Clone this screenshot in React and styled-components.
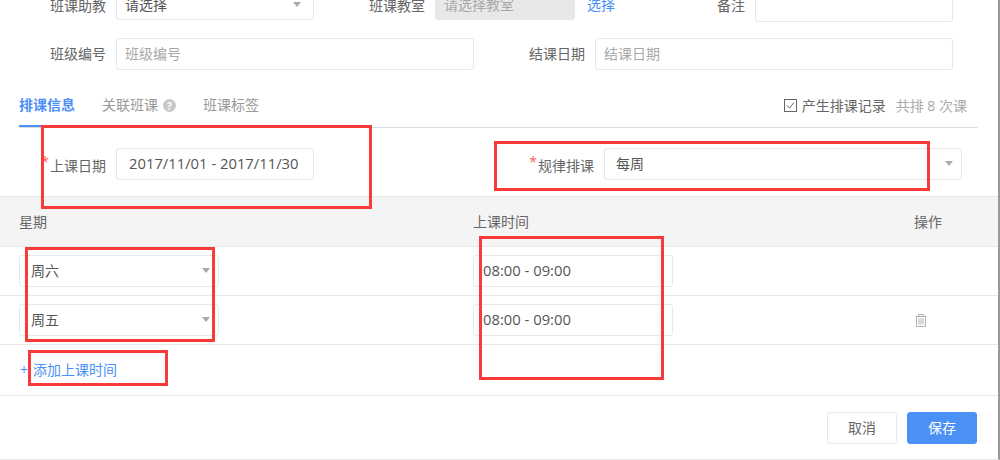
import React from "react"
import styled, { createGlobalStyle } from "styled-components"

const GlobalStyle = createGlobalStyle`
	html, body {
		margin: 0;
		padding: 0;
		background: #fff;
	}
	body {
		font-family: "Open Sans", "Noto Sans CJK SC", sans-serif;
		font-size: 14px;
		color: #666;
	}
`

const Page = styled.div`
	position: relative;
	width: 1000px;
	height: 460px;
	overflow: hidden;
	background: #fff;
	box-sizing: border-box;
	border-bottom: 1px solid #e8e8e8;
	border-right: 2px solid #999;
`

const FormRow = styled.div`
	display: flex;
	align-items: center;
	padding-left: 19px;
	margin-top: ${p => p.$top}px;
	height: 32px;
`

const Label = styled.span`
	flex: none;
	width: ${p => p.$width || 87}px;
	margin-left: ${p => p.$gap || 0}px;
	margin-right: 10px;
	padding: ${p => p.$low ? "2px 0 0" : "0 0 2px"};
	text-align: right;
	font-size: 14px;
	color: #666;
	white-space: nowrap;
`

const Required = styled.i`
	font-style: normal;
	color: #ff5c5c;
	font-size: 14px;
	line-height: 1;
	margin-right: 1px;
	position: relative;
	top: -4px;
`

const Box = styled.div`
	flex: none;
	box-sizing: border-box;
	display: flex;
	align-items: center;
	justify-content: space-between;
	width: ${p => p.$width}px;
	height: 32px;
	margin-top: ${p => p.$shift || 0}px;
	padding: 0 ${p => p.$padRight || 8}px ${p => p.$low ? 0 : 2}px ${p => p.$pad || 8}px;
	border: 1px solid #e8e8e8;
	border-radius: 3px;
	background: ${p => p.$disabled ? "#e8e8e8" : "#fff"};
	color: ${p => p.$placeholder ? "#a8a8a8" : "#555"};
	font-size: ${p => p.$size || 14}px;
	white-space: nowrap;
`

const Caret = styled.span`
	flex: none;
	width: 0;
	height: 0;
	border-left: 4.5px solid transparent;
	border-right: 4.5px solid transparent;
	border-top: 5px solid #aaa;
`

const SelectLink = styled.a`
	margin-left: 12px;
	color: #4a90f5;
	font-size: 14px;
	white-space: nowrap;
`

const Tabs = styled.div`
	display: flex;
	align-items: flex-start;
	justify-content: space-between;
	margin: 22px 20px 0 19px;
	height: 35px;
	border-bottom: 1px solid #ddd;
`

const TabList = styled.div`
	display: flex;
	gap: 27px;
`

const Tab = styled.div`
	display: flex;
	align-items: flex-start;
	gap: 5px;
	height: 35px;
	box-sizing: border-box;
	padding-top: 3px;
	line-height: 20px;
	font-size: 14px;
	font-weight: ${p => p.$active ? 700 : 400};
	color: ${p => p.$active ? "#4a90f5" : "#999"};
	border-bottom: ${p => p.$active ? "2px solid #4a90f5" : "none"};
`

const Help = styled.span`
	display: inline-flex;
	align-items: center;
	justify-content: center;
	width: 13px;
	height: 13px;
	margin-top: 4px;
	border-radius: 50%;
	background: #c8c8c8;
	color: #fff;
	font-size: 10px;
	line-height: 1;
	font-weight: 700;
`

const RecordWrap = styled.div`
	display: flex;
	align-items: center;
	height: 26px;
	margin-right: 11px;
`

const Check = styled.span`
	display: flex;
	align-items: center;
	justify-content: center;
	width: 13px;
	height: 13px;
	box-sizing: border-box;
	border: 1px solid #666;
	margin-right: 5px;
`

const RecordText = styled.span`
	color: #666;
	font-size: 14px;
`

const Total = styled.span`
	margin-left: 10px;
	color: #aaa;
	font-size: 14px;
`

const DateRow = styled.div`
	display: flex;
	align-items: center;
	padding-left: 19px;
	margin-top: 20px;
	height: 32px;
`

const Table = styled.div`
	margin-top: 16px;
`

const Grid = styled.div`
	display: grid;
	grid-template-columns: 454px 441px 1fr;
	align-items: center;
	box-sizing: border-box;
	height: ${p => p.$height}px;
	padding-left: 19px;
	border-bottom: 1px solid #e8e8e8;
	background: ${p => p.$head ? "#f4f4f4" : "#fff"};
	border-top: ${p => p.$head ? "1px solid #e8e8e8" : "none"};
`

const HeadCell = styled.div`
	padding-bottom: 2px;
	color: #666;
	font-size: 14px;
`

const TrashCell = styled.div`
	display: flex;
	padding: 0 0 0 1px;
`

const AddRow = styled.div`
	display: flex;
	align-items: center;
	height: 51px;
	box-sizing: border-box;
	padding: 0 0 2px 20px;
	border-bottom: 1px solid #e8e8e8;
	color: #4a90f5;
	font-size: 14px;
	gap: 5px;
`

const Footer = styled.div`
	display: flex;
	justify-content: flex-end;
	gap: 10px;
	padding: 16px 21px 0 0;
`

const Button = styled.button`
	width: 70px;
	height: 32px;
	padding: 0 0 2px;
	border-radius: 3px;
	border: 1px solid ${p => p.$primary ? "#4a90f5" : "#e8e8e8"};
	background: ${p => p.$primary ? "#4a90f5" : "#fff"};
	color: ${p => p.$primary ? "#fff" : "#666"};
	font-family: inherit;
	font-size: 14px;
`

const Mark = styled.div`
	position: absolute;
	left: ${p => p.$x}px;
	top: ${p => p.$y}px;
	width: ${p => p.$w}px;
	height: ${p => p.$h}px;
	box-sizing: border-box;
	border: 3px solid #f93a3a;
	pointer-events: none;
`

const rows = [
	{ day: "周六", time: "08:00 - 09:00" },
	{ day: "周五", time: "08:00 - 09:00", removable: true },
]

const marks = [
	[41, 125, 331, 84],
	[494, 141, 436, 50],
	[25, 247, 190, 95],
	[479, 236, 185, 144],
	[28, 350, 140, 36],
]

const TrashIcon = () => (
	<svg width="12" height="13" viewBox="0 0 12 13" fill="none" stroke="#b0b0b0" strokeWidth="1">
		<path d="M0.5 2.5 H11.5 M3.5 2.5 V0.5 H8.5 V2.5 M1.5 2.5 V12.5 H10.5 V2.5 M4 4.5 V10.5 M6 4.5 V10.5 M8 4.5 V10.5" />
	</svg>
)

export default function App() {
	return (
		<Page>
			<GlobalStyle />
			<FormRow $top={-12}>
				<Label $low>班课助教</Label>
				<Box $width={198} $padRight={12} $low>请选择<Caret /></Box>
				<Label $gap={24} $low>班课教室</Label>
				<Box $width={140} $disabled $placeholder $low>请选择教室</Box>
				<SelectLink>选择</SelectLink>
				<Label $width={130} $low>备注</Label>
				<Box $width={198} $shift={4} />
			</FormRow>
			<FormRow $top={18}>
				<Label>班级编号</Label>
				<Box $width={358} $placeholder>班级编号</Box>
				<Label $gap={24}>结课日期</Label>
				<Box $width={358} $placeholder>结课日期</Box>
			</FormRow>
			<Tabs>
				<TabList>
					<Tab $active>排课信息</Tab>
					<Tab>关联班课<Help>?</Help></Tab>
					<Tab>班课标签</Tab>
				</TabList>
				<RecordWrap>
					<Check>
						<svg width="9" height="9" viewBox="0 0 9 9" fill="none" stroke="#666" strokeWidth="1">
							<path d="M1 4.5 L3.5 7 L8 1.5" />
						</svg>
					</Check>
					<RecordText>产生排课记录</RecordText>
					<Total>共排 8 次课</Total>
				</RecordWrap>
			</Tabs>
			<DateRow>
				<Label $low><Required>*</Required>上课日期</Label>
				<Box $width={198} $pad={12} $size={14.8}>2017/11/01 - 2017/11/30</Box>
				<Label $low $gap={193}><Required>*</Required>规律排课</Label>
				<Box $width={358} $pad={11}>每周<Caret /></Box>
			</DateRow>
			<Table>
				<Grid $head $height={51}>
					<HeadCell>星期</HeadCell>
					<HeadCell>上课时间</HeadCell>
					<HeadCell>操作</HeadCell>
				</Grid>
				{rows.map(row => (
					<Grid $height={49} key={row.day}>
						<Box $width={200} $pad={11}>{row.day}<Caret /></Box>
						<Box $width={200} $pad={9} $size={14.8}>{row.time}</Box>
						<TrashCell>{row.removable && <TrashIcon />}</TrashCell>
					</Grid>
				))}
				<AddRow><span>+</span>添加上课时间</AddRow>
			</Table>
			<Footer>
				<Button>取消</Button>
				<Button $primary>保存</Button>
			</Footer>
			{marks.map(([x, y, w, h]) => (
				<Mark key={x} $x={x} $y={y} $w={w} $h={h} />
			))}
		</Page>
	)
}
